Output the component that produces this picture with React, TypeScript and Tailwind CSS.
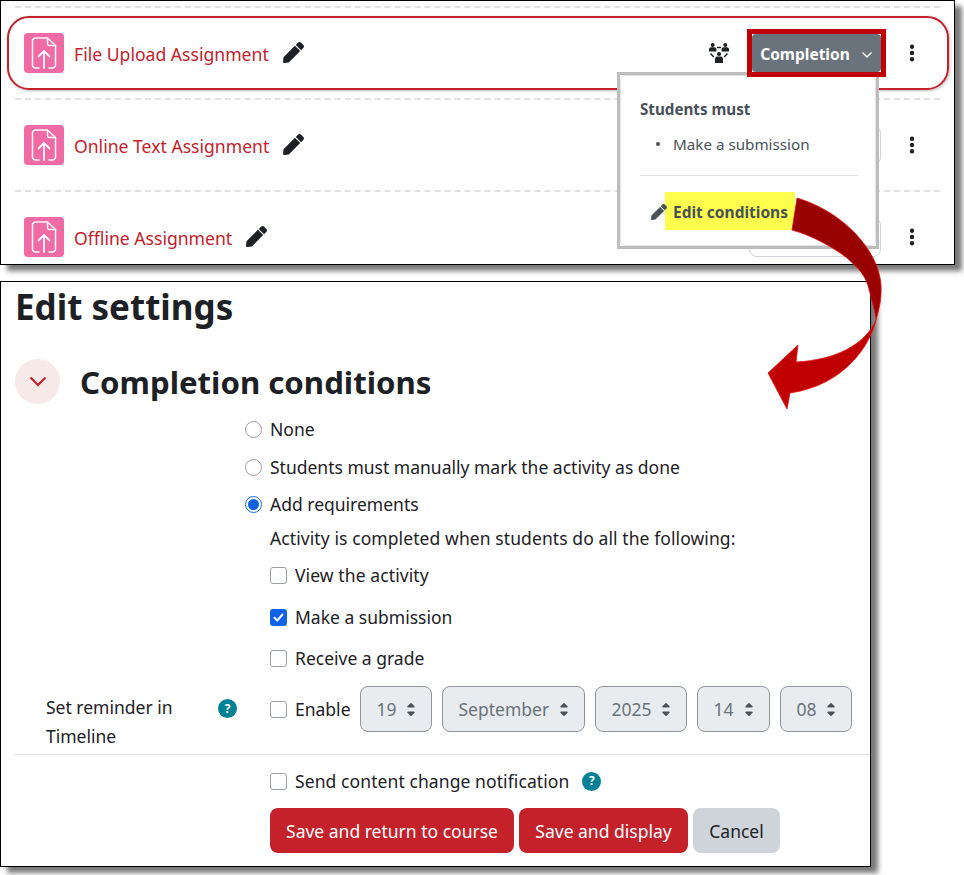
import { FaPen } from 'react-icons/fa'
import { FaEllipsisVertical, FaCaretDown, FaCaretUp } from 'react-icons/fa6'

const FONT = 'font-["Noto_Sans",sans-serif]'

function AssignIcon() {
  return (
    <div className="w-10 h-10 rounded bg-[#f06aa6] flex items-center justify-center shrink-0">
      <svg width="26" height="32" viewBox="0 0 26 32" fill="none" stroke="#fff" strokeWidth="1.5" strokeLinecap="round" strokeLinejoin="round" opacity="0.95">
        <path d="M8 31H4.5A3 3 0 0 1 1.5 28V4A3 3 0 0 1 4.5 1H16.5L24.5 8.5V28A3 3 0 0 1 21.5 31H18" />
        <path d="M16.5 1V6.5A2 2 0 0 0 18.5 8.5H24.5" />
        <path d="M13 31V14M7.5 19.5L13 14L18.5 19.5" strokeWidth="1.8" />
      </svg>
    </div>
  )
}

function GroupIcon() {
  return (
    <svg width="20" height="20" viewBox="0 0 20 20" fill="#1d2125">
      <circle cx="3.700" cy="2" r="2" />
      <circle cx="16.300" cy="2" r="2" />
      <path d="M0 8.500V6.500C0 5 1 4.200 2 4.200H5.400C6.400 4.200 7.400 5 7.400 6.500V8.500Z" />
      <path d="M12.600 8.500V6.500C12.600 5 13.600 4.200 14.600 4.200H18C19 4.200 20 5 20 6.500V8.500Z" />
      <circle cx="10" cy="11" r="2.100" />
      <path d="M6 20V16C6 14.500 7 13.500 8.200 13.500H11.800C13 13.500 14 14.500 14 16V20Z" />
      <path d="M8 4.500H12M1.500 10.500L4.800 14M18.500 10.500L15.200 14" stroke="#1d2125" strokeWidth="1.400" />
    </svg>
  )
}

function CourseRow({ title, children }: { title: string; children?: React.ReactNode }) {
  return (
    <div className="h-[92px] border-t-2 border-dashed border-[#dee2e6] mx-[14px] pl-[9px] pr-[18px] pt-[25px] flex items-start">
      <AssignIcon />
      <span className="ml-[10px] mt-[9px] text-[17.6px] leading-6 text-[#c4212a]">{title}</span>
      <FaPen className="ml-[14px] mt-[9px] text-[21px] text-[#1d2125]" />
      <div className="ml-auto flex items-center h-10">
        {children}
        <FaEllipsisVertical className="ml-[16px] text-[#1d2125] text-[20px]" />
      </div>
    </div>
  )
}

function Radio({ label, checked, className }: { label: string; checked?: boolean; className?: string }) {
  return (
    <div className={`flex items-center ${className ?? ''}`}>
      {checked ? (
        <span className="w-[17px] h-[17px] rounded-full border border-[#0f6cf0] bg-white flex items-center justify-center">
          <span className="w-[11px] h-[11px] rounded-full bg-[#0f62e6]" />
        </span>
      ) : (
        <span className="w-[17px] h-[17px] rounded-full border border-[#9a9fa6] bg-white" />
      )}
      <span className="ml-2">{label}</span>
    </div>
  )
}

function Check({ label, checked, className }: { label: string; checked?: boolean; className?: string }) {
  return (
    <div className={`flex items-center ${className ?? ''}`}>
      {checked ? (
        <span className="w-[17px] h-[17px] rounded-[3px] bg-[#0f62e6] flex items-center justify-center">
          <svg width="13" height="13" viewBox="0 0 13 13" fill="none" stroke="#fff" strokeWidth="2" strokeLinecap="round" strokeLinejoin="round">
            <path d="M2.500 6.800L5.200 9.500L10.500 3.500" />
          </svg>
        </span>
      ) : (
        <span className="w-[17px] h-[17px] rounded-[3px] border border-[#9a9fa6] bg-white" />
      )}
      <span className="ml-2">{label}</span>
    </div>
  )
}

function HelpIcon() {
  return (
    <span className="w-[19px] h-[19px] rounded-full bg-[#008196] text-white text-[12px] font-bold leading-none flex items-center justify-center">?</span>
  )
}

function DateSelect({ value, width }: { value: string; width: string }) {
  return (
    <div className={`${width} h-[46px] pl-4 pr-[14px] rounded-lg border border-[#8f959e] bg-[#e9ecef] text-[#6a737b] flex items-center justify-between`}>
      <span>{value}</span>
      <span className="flex flex-col text-[#495057] text-[12px] leading-none">
        <FaCaretUp className="-mb-[5px]" />
        <FaCaretDown />
      </span>
    </div>
  )
}

export default function App() {
  return (
    <div className={`relative w-[964px] h-[875px] bg-white overflow-hidden ${FONT} text-[#1d2125]`}>
      {/* top panel: course list */}
      <div className="relative w-[955px] h-[265px] border border-black bg-white shadow-[7px_6px_5px_#7a7a7a] overflow-hidden pt-[5px]">
        <CourseRow title="File Upload Assignment">
          <GroupIcon />
          <div className="ml-[23px] mr-[5px] w-[129px] h-[38px] rounded bg-[#6a737b] text-white font-bold text-[15.500px] flex items-center justify-center gap-[11px] pt-[3px]">
            Completion
            <svg width="12" height="8" viewBox="0 0 12 8" fill="none" stroke="#fff" strokeWidth="1.500"><path d="M1.500 1.500L6 6L10.500 1.500" /></svg>
          </div>
        </CourseRow>
        <CourseRow title="Online Text Assignment">
          <div className="w-[132px] h-10 mr-[5px] rounded-lg border border-[#ced4da]" />
        </CourseRow>
        <CourseRow title="Offline Assignment">
          <div className="w-[132px] h-10 mr-[5px] rounded-lg border border-[#ced4da]" />
        </CourseRow>
        {/* red ring on first row */}
        <div className="absolute left-[6px] top-[15px] w-[942px] h-[74px] rounded-[22px] border-2 border-[#c4212a] shadow-[1px_1px_3px_#bbb] pointer-events-none" />
      </div>

      {/* popover */}
      <div className="absolute left-[617px] top-[72px] w-[262px] h-[177px] border-[3px] border-[#bdbdbd] bg-white text-[#495057]">
        <div className="h-full rounded-md border border-[#dee2e6] pl-[19px] pr-[16px]">
          <div className="mt-[23px] text-[15.200px] font-bold leading-5">Students must</div>
          <div className="mt-[15px] text-[15.200px] leading-5 flex items-center">
            <span className="ml-4 mr-[13px] w-1 h-1 rounded-full bg-[#495057]" />
            Make a submission
          </div>
          <div className="mt-[21px] border-t border-[#dee2e6]" />
        </div>
      </div>
      <div className="absolute left-[665px] top-[192px] w-[130px] h-[38px] bg-[#ffff4d] text-[#495057] text-[15.500px] font-bold flex items-center pl-2 pt-[4px]">
        Edit conditions
      </div>
      <FaPen className="absolute left-[651px] top-[204px] text-[16px] text-[#495057]" />
      {/* callout box round the Completion button, sits over the popover */}
      <div className="absolute left-[747px] top-[29px] w-[139px] h-12 border-[5px] border-[#c00000]" />

      {/* bottom panel: form */}
      <div className="mt-[16px] w-[871px] h-[586px] border border-black bg-white shadow-[7px_6px_5px_#7a7a7a] text-[17.500px] leading-6">
        <h2 className="ml-[14px] mt-[3px] text-[35px] leading-[44px] font-bold">Edit settings</h2>
        <div className="flex items-center mt-[30px] ml-[14px]">
          <span className="w-[45px] h-[45px] rounded-full bg-[#f8e9e9] flex items-center justify-center">
            <svg className="ml-[1px]" width="18" height="11" viewBox="0 0 18 11" fill="none" stroke="#c4212a" strokeWidth="2.200"><path d="M1.500 1.500L9 9L16.500 1.500" /></svg>
          </span>
          <h3 className="ml-5 text-[31.200px] leading-[44px] font-bold">Completion conditions</h3>
        </div>
        <div className="ml-[244px] mt-[13px]">
          <Radio label="None" className="h-6" />
          <Radio label="Students must manually mark the activity as done" className="h-6 mt-[14px]" />
          <Radio label="Add requirements" checked className="h-6 mt-[13px]" />
          <div className="ml-[25px] mt-[10px] tracking-[0.09px]">Activity is completed when students do all the following:</div>
          <div className="ml-[25px]">
            <Check label="View the activity" className="h-6 mt-[13px] tracking-[0.1px]" />
            <Check label="Make a submission" checked className="h-6 mt-[18px]" />
            <Check label="Receive a grade" className="h-6 mt-[17px]" />
          </div>
        </div>
        <div className="flex ml-[45px] mt-[16px] mr-[17px]">
          <div className="w-[172px] leading-[29px] mt-[7px] pr-[40px]">Set reminder in Timeline</div>
          <div className="w-[22px] mt-[13px]"><HelpIcon /></div>
          <div className="flex items-start ml-[30px] gap-[10px]">
            <Check label="Enable" className="h-[46px] -mr-px" />
            <DateSelect value="19" width="w-[72px]" />
            <DateSelect value="September" width="w-[143px]" />
            <DateSelect value="2025" width="w-[92px]" />
            <DateSelect value="14" width="w-[73px]" />
            <DateSelect value="08" width="w-[72px]" />
          </div>
        </div>
        <div className="ml-[14px] mt-[3px] border-t border-[#dee2e6]" />
        <div className="ml-[269px] mt-[14px] flex items-center h-6">
          <Check label="Send content change notification" className="tracking-[0.09px]" />
          <span className="ml-[13px]"><HelpIcon /></span>
        </div>
        <div className="ml-[269px] mt-[15px] flex gap-[5px]">
          <div className="h-[45px] w-[244px] rounded-lg bg-[#c4212a] text-white flex items-center justify-center">Save and return to course</div>
          <div className="h-[45px] w-[169px] rounded-lg bg-[#c4212a] text-white flex items-center justify-center">Save and display</div>
          <div className="h-[45px] w-[87px] rounded-lg bg-[#ced4da] flex items-center justify-center">Cancel</div>
        </div>
      </div>

      {/* curved arrow */}
      <svg className="absolute left-0 top-0 pointer-events-none" width="964" height="875" viewBox="0 0 964 875">
        <path d="M797 198C845 212 884 255 881 293C881 303 878 312 876 320C875 310 872 302 870 293C866 275 860 270 847 258C830 245 810 235 792 230Z" fill="#990000" stroke="#e61010" strokeWidth="0.8" />
        <path d="M876 320C870 345 845 385 790 393L787 409L768 373L798 345L796 362C835 360 865 345 876 320Z" fill="#c00000" stroke="#e61010" strokeWidth="0.8" />
      </svg>
    </div>
  )
}
